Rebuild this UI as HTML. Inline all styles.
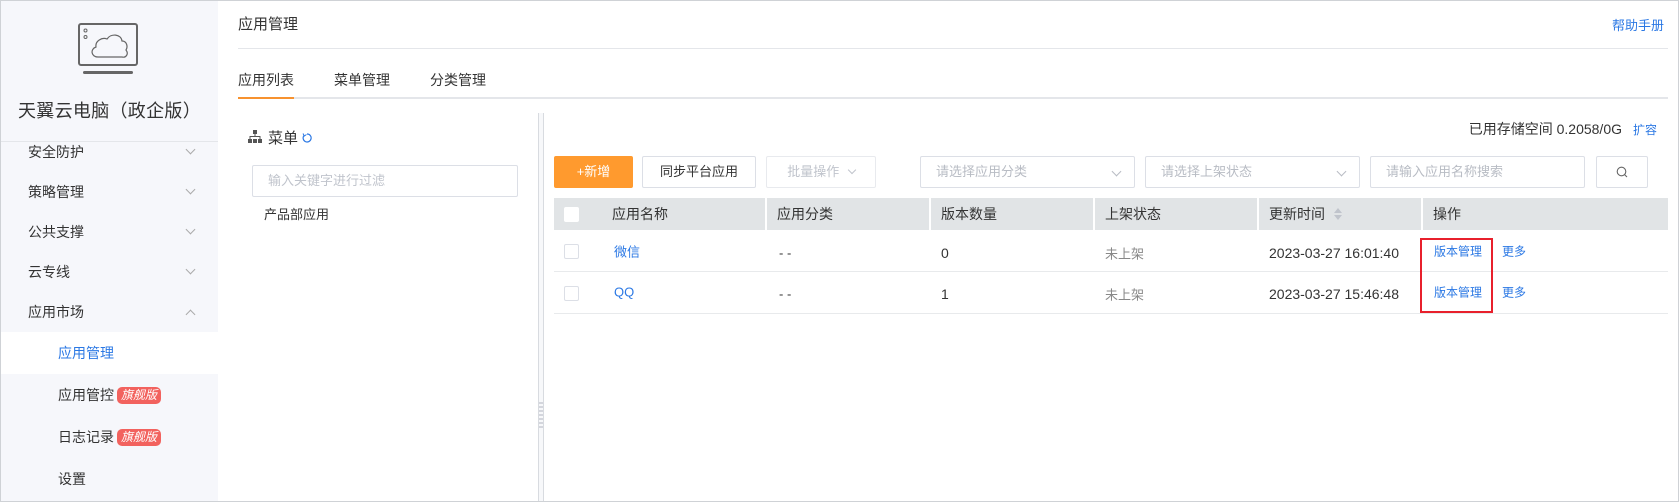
<!DOCTYPE html>
<html><head><meta charset="utf-8"><style>
*{margin:0;padding:0;box-sizing:border-box}
body{width:1679px;height:502px;overflow:hidden;background:#fff;font-family:"Liberation Sans","Noto Sans CJK SC",sans-serif;color:#333;position:relative}
.frame{position:absolute;left:0;top:0;width:1679px;height:502px;border:1px solid #cfd2d6}
.a{position:absolute;white-space:nowrap}
.side{position:absolute;left:1px;top:1px;width:217px;height:500px;background:#f6f7fb}
.mi{position:absolute;left:28px;font-size:14px;color:#333;transform:translateY(-50%)}
.chev{position:absolute;left:187px;width:7px;height:7px;border-right:1px solid #aaa;border-bottom:1px solid #aaa}
.badge{display:inline-block;background:#f2625e;color:#fff;font-style:italic;font-size:12px;border-radius:5px;padding:0 4px;height:17px;line-height:17px;margin-left:3px;vertical-align:1px}
.btn{position:absolute;top:156px;height:32px;border:1px solid #dcdfe6;border-radius:2px;font-size:13px;line-height:30px;text-align:center;background:#fff}
.inp{position:absolute;top:156px;height:32px;border:1px solid #dcdfe6;border-radius:2px;font-size:13px;line-height:30px;color:#b8bcc4;padding-left:15px}
.dd{position:absolute;right:14px;top:11px;width:7px;height:7px;border-right:1px solid #b8bcc4;border-bottom:1px solid #b8bcc4;transform:rotate(45deg)}
.th{position:absolute;top:198px;height:32px;background:#e1e4e6;font-size:14px;line-height:32px;color:#333}
.td{position:absolute;font-size:13px;transform:translateY(-50%)}
.cb{position:absolute;width:15px;height:15px;border:1px solid #dcdfe6;border-radius:2px;background:#fff}
.hl{position:absolute;height:1px;background:#e8eaec}
.blue{color:#2b78e4}
</style></head><body>
<div class="side"></div>
<svg class="a" style="left:74px;top:20px" width="70" height="58" viewBox="74 20 70 58">
<rect x="79" y="24" width="58" height="41" rx="2" fill="none" stroke="#666" stroke-width="2"/>
<rect x="83" y="71" width="50" height="3" rx="1.5" fill="#666"/>
<circle cx="85.5" cy="30.5" r="1.5" fill="none" stroke="#666"/><circle cx="85.5" cy="37" r="1.5" fill="none" stroke="#666"/>
<path d="M98 57 C91 57 90 49 96 47 C95 41 102 37 107 39 C111 33 121 34 122 41 C127 41 128 47 126 50 C129 54 126 58 122 57 Z" fill="none" stroke="#666" stroke-width="1.2"/>
</svg>
<div class="a" style="left:18px;top:97px;font-size:18px;color:#333;letter-spacing:0.3px">天翼云电脑（政企版）</div>
<div class="a" style="left:1px;top:141px;width:217px;height:1px;background:#e4e6ea"></div>
<div class="mi" style="top:152px">安全防护</div><div class="chev" style="top:146px;transform:rotate(45deg)"></div>
<div class="mi" style="top:192px">策略管理</div><div class="chev" style="top:186px;transform:rotate(45deg)"></div>
<div class="mi" style="top:232px">公共支撑</div><div class="chev" style="top:226px;transform:rotate(45deg)"></div>
<div class="mi" style="top:272px">云专线</div><div class="chev" style="top:266px;transform:rotate(45deg)"></div>
<div class="mi" style="top:312px">应用市场</div><div class="chev" style="top:311px;transform:rotate(-135deg)"></div>
<div class="a" style="left:1px;top:332px;width:217px;height:42px;background:#fff"></div>
<div class="mi blue" style="top:353px;left:58px">应用管理</div>
<div class="mi" style="top:395px;left:58px">应用管控<span class="badge">旗舰版</span></div>
<div class="mi" style="top:437px;left:58px">日志记录<span class="badge">旗舰版</span></div>
<div class="mi" style="top:479px;left:58px">设置</div>

<div class="a" style="left:238px;top:13px;font-size:15px">应用管理</div>
<div class="a blue" style="right:15px;top:15px;font-size:13px">帮助手册</div>
<div class="a" style="left:238px;top:48px;width:1430px;height:1px;background:#e4e6ea"></div>
<div class="a" style="left:238px;top:70px;font-size:14px">应用列表</div>
<div class="a" style="left:334px;top:70px;font-size:14px">菜单管理</div>
<div class="a" style="left:430px;top:70px;font-size:14px">分类管理</div>
<div class="a" style="left:238px;top:97px;width:1430px;height:2px;background:#e4e6ea"></div>
<div class="a" style="left:238px;top:97px;width:56px;height:2px;background:#f7922f"></div>

<div class="a" style="left:538px;top:113px;width:6px;height:388px;border-left:1px solid #d8dbe0;border-right:1px solid #d8dbe0;background:#f7f8fa"></div>
<svg class="a" style="left:539px;top:402px" width="4" height="26"><g stroke="#b0b3c0"><path d="M0 1H4M0 5H4M0 9H4M0 13H4M0 17H4M0 21H4M0 25H4"/></g></svg>

<svg class="a" style="left:248px;top:130px" width="14" height="13" viewBox="0 0 14 13"><g fill="#555"><rect x="5" y="0" width="4" height="4"/><rect x="0" y="9" width="4" height="4"/><rect x="5" y="9" width="4" height="4"/><rect x="10" y="9" width="4" height="4"/><rect x="6.5" y="4" width="1" height="3"/><rect x="1.5" y="6" width="11" height="1"/><rect x="1.5" y="6" width="1" height="3"/><rect x="11.5" y="6" width="1" height="3"/></g></svg>
<div class="a" style="left:268px;top:127px;font-size:15px">菜单</div>
<svg class="a" style="left:302px;top:133px" width="10" height="10" viewBox="0 0 10 10"><path d="M2 2.5A4 4 0 1 0 5 1" fill="none" stroke="#2b78e4" stroke-width="1.2"/><path d="M1 0.5L2.3 3 4.5 1.5" fill="none" stroke="#2b78e4" stroke-width="1"/></svg>
<div class="a" style="left:252px;top:165px;width:266px;height:32px;border:1px solid #dcdfe6;border-radius:2px;font-size:13px;color:#c0c4cc;line-height:30px;padding-left:15px">输入关键字进行过滤</div>
<div class="a" style="left:264px;top:204px;font-size:13px">产品部应用</div>

<div class="a" style="right:57px;top:119px;font-size:14px">已用存储空间 0.2058/0G</div>
<div class="a blue" style="left:1633px;top:121px;font-size:12px">扩容</div>

<div class="btn" style="left:554px;width:79px;background:#ff9a2e;border-color:#ff9a2e;color:#fff">+新增</div>
<div class="btn" style="left:642px;width:114px;color:#333">同步平台应用</div>
<div class="btn" style="left:766px;width:110px;color:#c0c4cc;border-color:#e8eaee">批量操作 <span style="display:inline-block;width:6px;height:6px;border-right:1px solid #c0c4cc;border-bottom:1px solid #c0c4cc;transform:rotate(45deg);margin-left:6px;vertical-align:3px"></span></div>
<div class="inp" style="left:920px;width:215px">请选择应用分类<div class="dd"></div></div>
<div class="inp" style="left:1145px;width:215px">请选择上架状态<div class="dd"></div></div>
<div class="inp" style="left:1370px;width:215px">请输入应用名称搜索</div>
<div class="btn" style="left:1596px;width:52px"><svg width="12" height="12" style="vertical-align:-2px"><circle cx="5.5" cy="5.5" r="4.3" fill="none" stroke="#666" stroke-width="1.1"/><path d="M8.6 8.6L11 11" stroke="#666" stroke-width="1.1"/></svg></div>

<div class="th" style="left:554px;width:211px"></div>
<div class="cb" style="left:564px;top:207px;border-color:#fff"></div>
<div class="a" style="left:612px;top:198px;line-height:32px;font-size:14px">应用名称</div>
<div class="th" style="left:767px;width:162px;padding-left:10px">应用分类</div>
<div class="th" style="left:931px;width:162px;padding-left:10px">版本数量</div>
<div class="th" style="left:1095px;width:162px;padding-left:10px">上架状态</div>
<div class="th" style="left:1259px;width:162px;padding-left:10px">更新时间 <svg width="10" height="14" style="vertical-align:-2px;margin-left:4px"><path d="M1 6L5 1 9 6Z M1 8L5 13 9 8Z" fill="#c0c4cc"/></svg></div>
<div class="th" style="left:1423px;width:245px;padding-left:10px">操作</div>

<div class="cb" style="left:564px;top:244px"></div>
<div class="td blue" style="left:614px;top:251px">微信</div>
<div class="td" style="left:779px;top:253px">- -</div>
<div class="td" style="left:941px;top:253px;font-size:14px">0</div>
<div class="td" style="left:1105px;top:253px;color:#888">未上架</div>
<div class="td" style="left:1269px;top:253px;font-size:14px">2023-03-27 16:01:40</div>
<div class="td blue" style="left:1434px;top:251px;font-size:12px">版本管理</div>
<div class="td blue" style="left:1502px;top:251px;font-size:12px">更多</div>
<div class="hl" style="left:554px;top:271px;width:1114px"></div>

<div class="cb" style="left:564px;top:286px"></div>
<div class="td blue" style="left:614px;top:292px">QQ</div>
<div class="td" style="left:779px;top:294px">- -</div>
<div class="td" style="left:941px;top:294px;font-size:14px">1</div>
<div class="td" style="left:1105px;top:294px;color:#888">未上架</div>
<div class="td" style="left:1269px;top:294px;font-size:14px">2023-03-27 15:46:48</div>
<div class="td blue" style="left:1434px;top:292px;font-size:12px">版本管理</div>
<div class="td blue" style="left:1502px;top:292px;font-size:12px">更多</div>
<div class="hl" style="left:554px;top:313px;width:1114px"></div>

<div class="a" style="left:1420px;top:238px;width:73px;height:75px;border:2px solid #e8202c"></div>
<div class="frame"></div>
</body></html>
